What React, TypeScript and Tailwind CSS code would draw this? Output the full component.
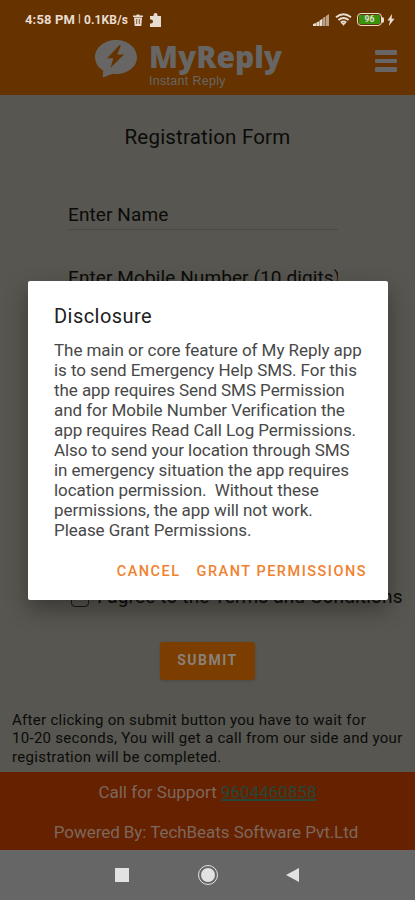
import type { ReactNode } from "react";

const disclosureLines = [
  "The main or core feature of My Reply app",
  "is to send Emergency Help SMS. For this",
  "the app requires Send SMS Permission",
  "and for Mobile Number Verification the",
  "app requires Read Call Log Permissions.",
  "Also to send your location through SMS",
  "in emergency situation the app requires",
  "location permission.  Without these",
  "permissions, the app will not work.",
  "Please Grant Permissions.",
];

const noteLines = [
  "After clicking on submit button you have to wait for",
  "10-20 seconds, You will get a call from our side and your",
  "registration will be completed.",
];

export default function App() {
  return (
    <div className="relative flex h-[900px] w-[415px] flex-col overflow-hidden bg-[#575650] font-['Roboto',sans-serif] text-[#0b0b0a]">
      <header className="h-[95px] shrink-0 bg-[#663300]">
        <StatusBar />
        <AppBar />
      </header>
      <RegistrationForm />
      <Footer />
      <NavigationBar />
      <DisclosureDialog />
    </div>
  );
}

function StatusBar() {
  return (
    <div className="flex h-[38px] items-center justify-between pt-px pr-[20px] pl-[25px] text-[#e8dcd2]">
      <div className="flex items-center">
        <span className="text-[13px] font-bold tracking-[0.15px] whitespace-pre">4:58 PM</span>
        <span className="ml-[3px] text-[11px] font-bold">|</span>
        <span className="ml-[3px] text-[12px] font-bold tracking-[0.15px]">0.1KB/s</span>
        <svg className="ml-1 size-3" viewBox="0 0 12 12" fill="currentColor">
          <path d="M1 1.5h3L5 .5h2l1 1h3V3H1zM2 3.5h8L9.3 12H2.7z" />
          <path d="M4.7 5v5M7.3 5v5" stroke="#663300" strokeWidth=".8" />
        </svg>
        <svg className="ml-[5px] h-[14px] w-[13px]" viewBox="0 0 13 14" fill="currentColor">
          <path d="M1 3h3.5V2a2 2 0 0 1 4 0v1H12v11H1v-3.5h1a2 2 0 0 0 0-4H1z" />
        </svg>
      </div>
      <div className="flex items-center">
        <svg className="h-3 w-4" viewBox="0 0 16 12" fill="currentColor">
          <path d="M0 12v-2l3-1v3zM3.4 12V8.4l2.8-1.2V12zM6.6 12V6.5l2.8-1.8V12z" />
          <path d="M9.8 12V4l2.7-1.5V12zM13 12V2l3-2v12z" opacity=".65" />
        </svg>
        <svg className="ml-1.5 h-[13px] w-[17px]" viewBox="0 0 17 13" fill="none" stroke="currentColor" strokeWidth="2">
          <path d="M1 4.2q7.5-6 15 0M3.4 7q5.1-4 10.2 0M5.8 9.6q2.7-2 5.4 0" />
          <path d="m6.3 10 2.2 2.8 2.2-2.8z" fill="currentColor" stroke="none" />
        </svg>
        <div className="ml-[5px] flex h-[13px] w-[25px] items-center justify-center rounded-[4px] border-[1.5px] border-[#e8dcd2] p-px">
          <div className="flex size-full items-center justify-center rounded-[1px] bg-[#39930c] text-[8.5px] leading-none font-bold">96</div>
        </div>
        <div className="h-[6px] w-[2px] rounded-r bg-[#e8dcd2]" />
        <svg className="ml-[3px] h-3 w-2" viewBox="0 0 8 12" fill="currentColor">
          <path d="M5 0 .5 6.5H3L1.8 12 7.5 4.8H4.7z" />
        </svg>
      </div>
    </div>
  );
}

function AppBar() {
  return (
    <div className="flex h-[57px] items-start pr-[18px] pl-[94px] text-[#676665]">
      <svg className="mt-[2px] h-[38px] w-[43px]" viewBox="0 0 43 38">
        <path d="M22 0c11.5 0 21 7.5 21 17.2S33.5 34 22 34q-1.5 0-3-.3L8.8 37.5l.4-6.8Q1 25.5 1 17.2C1 7.5 10.5 0 22 0z" fill="currentColor" />
        <path d="M25.5 5 13.2 18.3h6.2l-2.9 9.5L30 14.6h-6.8l3.6-9.2z" fill="#663300" />
      </svg>
      <div className="ml-[12px] flex flex-col">
        <span className="h-[37px] font-['Open_Sans',sans-serif] text-[30px] leading-[37px] font-extrabold tracking-[-0.05px]">MyReply</span>
        <span className="font-['Liberation_Sans',sans-serif] text-[12.5px] leading-[12px] tracking-[0.3px]">Instant Reply</span>
      </div>
      <div className="mt-[12px] ml-auto flex w-[22px] flex-col gap-1">
        <div className="h-[4.5px] rounded-[1px] bg-current" />
        <div className="h-[4.5px] rounded-[1px] bg-current" />
        <div className="h-[4.5px] rounded-[1px] bg-current" />
      </div>
    </div>
  );
}

function RegistrationForm() {
  return (
    <main className="flex h-[677px] shrink-0 flex-col">
      <h1 className="mt-[28px] text-center text-[20.5px] leading-7 tracking-[0.2px]">Registration Form</h1>
      <Field className="mt-[51px]">Enter Name</Field>
      <Field className="mt-[35px]">Enter Mobile Number (10 digits)</Field>
      <label className="mt-auto flex h-6 items-center pl-[71px] whitespace-nowrap">
        <span className="size-[18px] rounded-sm border-[1.5px] border-[#1b1b19]" />
        <span className="ml-[8px] text-[19px] tracking-[0.16px]">I agree to the Terms and Conditions</span>
      </label>
      <button className="mt-[32px] ml-[160px] h-[38px] w-[95px] shrink-0 rounded-[3px] bg-[#7b3d00] text-[14px] font-bold tracking-[1.5px] text-[#8a8278] shadow-sm">
        SUBMIT
      </button>
      <p className="mt-[31px] mb-[6px] pl-3 text-[15px] leading-[18.5px] tracking-[0.29px]">
        {noteLines.map((line) => (
          <span key={line} className="block whitespace-nowrap">{line}</span>
        ))}
      </p>
    </main>
  );
}

function Field({ className, children }: { className: string; children: ReactNode }) {
  return (
    <div className={`mr-[77px] ml-[68px] h-[28px] overflow-hidden border-b border-[#4b4a45] text-[19px] leading-[26px] tracking-[0.1px] whitespace-nowrap ${className}`}>
      {children}
    </div>
  );
}

function Footer() {
  return (
    <footer className="h-[78px] shrink-0 bg-[#662200] text-center text-[17px] leading-10 text-[#7d675c]">
      <p>
        Call for Support <span className="text-[#27463a] underline decoration-2">9604460858</span>
      </p>
      <p className="pr-[3px] tracking-[-0.06px]">Powered By: TechBeats Software Pvt.Ltd</p>
    </footer>
  );
}

function NavigationBar() {
  return (
    <nav className="flex h-[50px] shrink-0 items-center bg-[#666666] pl-[115px] text-[#e2e2e2]">
      <div className="size-[14px] bg-current" />
      <div className="ml-[69px] flex size-5 items-center justify-center rounded-full border-[1.5px] border-current">
        <div className="size-[14px] rounded-full bg-current" />
      </div>
      <svg className="ml-[68px] h-[14px] w-[13px]" viewBox="0 0 13 14">
        <path d="M13 0v14L0 7z" fill="currentColor" />
      </svg>
    </nav>
  );
}

function DisclosureDialog() {
  return (
    <div className="absolute top-[281px] left-[28px] flex h-[319px] w-[360px] flex-col rounded-[2px] bg-white px-[26px] shadow-[0_9px_22px_rgba(0,0,0,0.35)]">
      <h2 className="mt-[21px] text-[20px] leading-7 tracking-[0.45px] text-[#202020]">Disclosure</h2>
      <div className="mt-[10px] text-[17px] leading-5 tracking-[-0.06px] text-[#484848]">
        {disclosureLines.map((line) => (
          <p key={line} className="whitespace-pre">{line}</p>
        ))}
      </div>
      <div className="mt-[22px] -mr-[5px] flex justify-end gap-[16px] text-[14.5px] leading-5 font-medium tracking-[1.5px] text-[#f0822f]">
        <button>CANCEL</button>
        <button>GRANT PERMISSIONS</button>
      </div>
    </div>
  );
}
